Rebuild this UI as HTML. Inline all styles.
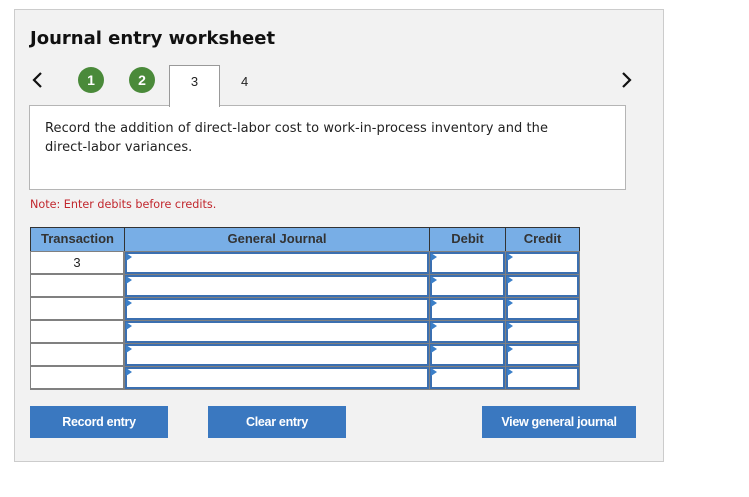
<!DOCTYPE html><html><head><style>
body{margin:0;background:#fff;width:749px;height:497px;position:relative;font-family:"Liberation Sans",Arial,sans-serif;overflow:hidden}
.a{position:absolute}
.panel{left:14px;top:9px;width:650px;height:453px;background:#f2f2f2;border:1px solid #ccc;box-sizing:border-box}
h1{position:absolute;left:30px;top:28px;margin:0;font-family:"DejaVu Sans",Verdana,sans-serif;font-size:18px;font-weight:bold;color:#111}
.circ{width:26px;height:26px;border-radius:50%;background:#4a8a3a;color:#fff;font-weight:bold;font-size:14px;text-align:center;line-height:26px}
.box{left:29px;top:105px;width:597px;height:85px;background:#fff;border:1px solid #b5b5b5;box-sizing:border-box}
.txt{left:45px;top:119px;font-family:"DejaVu Sans",Verdana,sans-serif;font-size:13px;line-height:19px;color:#222;letter-spacing:0.06px}
.note{left:30px;top:198px;font-family:"DejaVu Sans",Verdana,sans-serif;font-size:11.2px;color:#c1272d}
.th{background:#78aee6;border:1px solid #333;box-sizing:border-box;text-align:center;font-size:13px;font-weight:bold;color:#333;line-height:22px;top:227px;height:25px}
.btn{background:#3a78c0;color:#fff;font-weight:bold;font-size:12.5px;text-align:center;line-height:32px;height:32px;top:406px;letter-spacing:-0.3px}
.cell{background:#fff;border:2px solid #3b6fb0;box-sizing:border-box}
.tri{width:0;height:0;border-top:4px solid transparent;border-bottom:4px solid transparent;border-left:6px solid #3b7fc8}
</style></head><body>
<div class="a panel"></div>
<h1>Journal entry worksheet</h1>
<svg class="a" style="left:31px;top:71px" width="14" height="18"><path d="M10 2 L3 9 L10 16" fill="none" stroke="#111" stroke-width="2.2"/></svg>
<svg class="a" style="left:619px;top:71px" width="14" height="18"><path d="M4 2 L11 9 L4 16" fill="none" stroke="#111" stroke-width="2.2"/></svg>
<div class="a circ" style="left:78px;top:67px">1</div>
<div class="a circ" style="left:129px;top:67px">2</div>
<div class="a" style="left:169px;top:65px;width:51px;height:42px;background:#fff;border:1px solid #999;border-bottom:none;box-sizing:border-box;z-index:2;text-align:center;font-size:13px;line-height:32px;color:#222">3</div>
<div class="a" style="left:241px;top:74px;font-size:13px;color:#222">4</div>
<div class="a box"></div>
<div class="a" style="left:170px;top:105px;width:49px;height:2px;background:#fff;z-index:3"></div>
<div class="a txt">Record the addition of direct-labor cost to work-in-process inventory and the<br>direct-labor variances.</div>
<div class="a note">Note: Enter debits before credits.</div>
<div class="a th" style="left:30px;width:95px">Transaction</div>
<div class="a th" style="left:124px;width:306px">General Journal</div>
<div class="a th" style="left:429px;width:77px">Debit</div>
<div class="a th" style="left:505px;width:75px">Credit</div>
<div class="a" style="left:30px;top:251px;width:550px;height:139px;background:#808080"></div>
<div id="rows"></div>
<script>
var h='';for(var i=0;i<6;i++){var y=252+i*23;
h+='<div class="a" style="left:31px;top:'+y+'px;width:92px;height:21px;background:#fff;text-align:center;font-size:13px;line-height:21px;color:#222">'+(i==0?'3':'')+'</div>';
[[125,304],[430,75],[506,73]].forEach(function(c){h+='<div class="a cell" style="left:'+c[0]+'px;top:'+y+'px;width:'+c[1]+'px;height:22px"></div><div class="a tri" style="left:'+(c[0]+1)+'px;top:'+(y+1)+'px"></div>';});}
document.getElementById('rows').innerHTML=h;
</script>
<div class="a btn" style="left:30px;width:138px">Record entry</div>
<div class="a btn" style="left:208px;width:138px">Clear entry</div>
<div class="a btn" style="left:482px;width:154px">View general journal</div>
</body></html>
